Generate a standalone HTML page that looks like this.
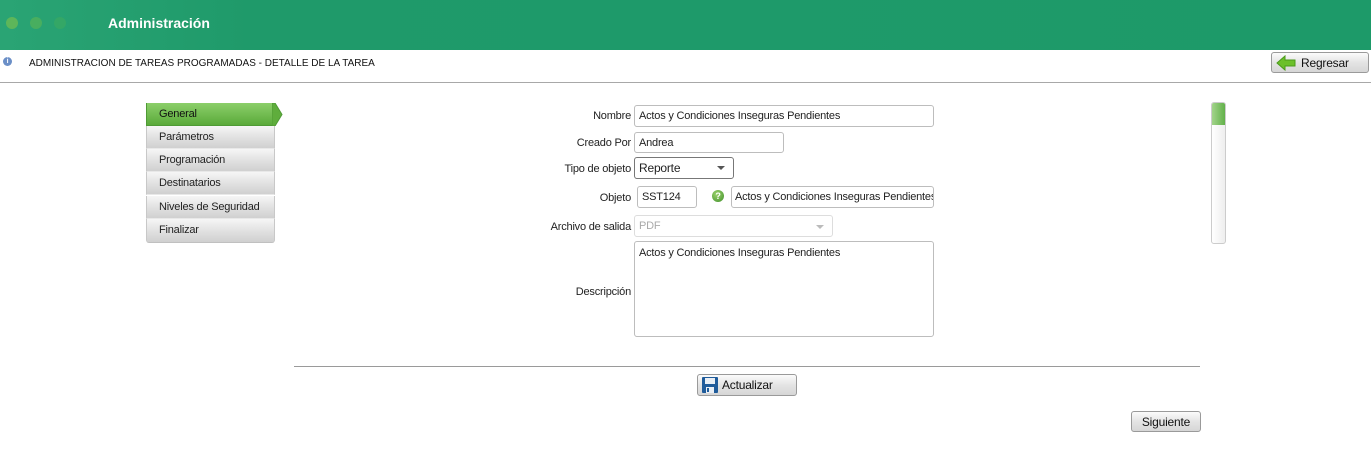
<!DOCTYPE html><html><head><meta charset="utf-8"><style>
*{box-sizing:border-box;margin:0;padding:0}
body{width:1371px;height:464px;background:#fff;position:relative;overflow:hidden;font-family:"Liberation Sans",sans-serif;font-size:11px;letter-spacing:-0.2px;color:#222}
.a{position:absolute;white-space:nowrap}
.hdr{left:0;top:0;width:1371px;height:50px;background:linear-gradient(90deg,#2aa474 0,#1f9a6a 250px,#1d9a69 100%)}
.dot{width:12px;height:12px;border-radius:50%;top:17px}
.btn{border:1px solid #9a9a9a;border-radius:3px;background:linear-gradient(#fbfbfb,#e4e4e4 50%,#d6d6d6);font-size:12px;color:#111;display:flex;align-items:center}
.tab{left:146px;width:129px;height:23px;border-bottom:1px solid #e8e8e8;background:linear-gradient(#f6f6f6,#e0e0e0 55%,#d0d0d0);font-size:11px;padding-left:12px;line-height:23px;border-left:1px solid #c8c8c8;border-right:1px solid #c8c8c8}
.lbl{width:200px;text-align:right;font-size:11px;left:431px}
.in{border:1px solid #bdbdbd;border-radius:3px;background:#fff;font-size:11px;padding-left:4px;display:flex;align-items:center;overflow:hidden}
</style></head><body>
<div class="a hdr"></div>
<div class="a dot" style="left:6px;background:#5db65a"></div>
<div class="a dot" style="left:30px;background:#48ae5f"></div>
<div class="a dot" style="left:54px;background:#34a766"></div>
<div class="a" style="left:108px;top:15px;color:#fff;font-weight:bold;font-size:14px;letter-spacing:0">Administración</div>
<div class="a" style="left:3px;top:57px;width:9px;height:9px;border-radius:50%;background:#6b8fc7;color:#fff;font-size:7px;text-align:center;line-height:9px;font-weight:bold">i</div>
<div class="a" style="left:29px;top:58px;font-size:10px;letter-spacing:0;color:#111">ADMINISTRACION DE TAREAS PROGRAMADAS - DETALLE DE LA TAREA</div>
<div class="a" style="left:0;top:82px;width:1371px;height:1px;background:#a8a8a8"></div>
<div class="a btn" style="left:1271px;top:52px;width:98px;height:21px;padding-left:4px">
<svg width="20" height="16" viewBox="0 0 20 16"><path d="M1 8L9 1V5H19V11H9V15Z" fill="#6cc02a" stroke="#4a9a1a"/></svg><span style="margin-left:5px">Regresar</span></div>

<div class="a tab" style="top:103px;background:linear-gradient(#8ccf6a,#5aaa3a);border-color:#4f9a35;color:#111">General</div>
<svg class="a" style="left:272px;top:103px" width="12" height="23"><path d="M0 0H3L10 11.5L3 23H0Z" fill="#5fad3c" stroke="#4f9a35"/></svg>
<div class="a tab" style="top:126px">Parámetros</div>
<div class="a tab" style="top:149px">Programación</div>
<div class="a tab" style="top:172px">Destinatarios</div>
<div class="a tab" style="top:196px">Niveles de Seguridad</div>
<div class="a tab" style="top:219px;border-bottom:1px solid #c0c0c0;border-radius:0 0 3px 3px;height:24px">Finalizar</div>

<div class="a lbl" style="top:110px">Nombre</div>
<div class="a in" style="left:634px;top:105px;width:300px;height:22px">Actos y Condiciones Inseguras Pendientes</div>
<div class="a lbl" style="top:137px">Creado Por</div>
<div class="a in" style="left:634px;top:132px;width:150px;height:21px">Andrea</div>
<div class="a lbl" style="top:163px">Tipo de objeto</div>
<div class="a in" style="left:634px;top:157px;width:100px;height:22px;border-color:#777;font-size:12px">Reporte<span style="position:absolute;right:8px;top:8px;border:4px solid transparent;border-top:4px solid #555"></span></div>
<div class="a lbl" style="top:192px">Objeto</div>
<div class="a in" style="left:637px;top:186px;width:60px;height:22px">SST124</div>
<div class="a" style="left:712px;top:190px;width:12px;height:12px;border-radius:50%;background:radial-gradient(circle at 40% 35%,#9ed36e,#3e8f2a);color:#fff;font-size:9px;font-weight:bold;text-align:center;line-height:12px">?</div>
<div class="a in" style="left:731px;top:186px;width:203px;height:22px;padding-left:3px">Actos y Condiciones Inseguras Pendientes</div>
<div class="a lbl" style="top:221px">Archivo de salida</div>
<div class="a in" style="left:634px;top:215px;width:199px;height:22px;color:#aaa;border-color:#ddd">PDF<span style="position:absolute;right:8px;top:9px;border:4px solid transparent;border-top:4px solid #bbb"></span></div>
<div class="a lbl" style="top:286px">Descripción</div>
<div class="a in" style="left:634px;top:241px;width:300px;height:96px;align-items:flex-start;padding-top:5px">Actos y Condiciones Inseguras Pendientes</div>

<div class="a" style="left:1211px;top:102px;width:15px;height:142px;border:1px solid #ccc;border-radius:3px;background:linear-gradient(90deg,#fff,#eee)"></div>
<div class="a" style="left:1212px;top:103px;width:13px;height:22px;background:linear-gradient(90deg,#a2d48a,#62b14a);border-radius:2px 2px 0 0"></div>

<div class="a" style="left:294px;top:366px;width:906px;height:1px;background:#9a9a9a"></div>
<div class="a btn" style="left:697px;top:374px;width:100px;height:22px;padding-left:4px">
<svg width="16" height="16" viewBox="0 0 16 16"><rect x="0" y="0" width="16" height="16" rx="1" fill="#1f5b9a"/><rect x="3" y="1" width="10" height="6" fill="#e8eef5"/><rect x="4" y="10" width="8" height="6" fill="#e8eef5"/><rect x="5" y="11" width="2" height="4" fill="#1f5b9a"/></svg><span style="margin-left:4px">Actualizar</span></div>
<div class="a btn" style="left:1131px;top:411px;width:70px;height:21px;justify-content:center">Siguiente</div>
</body></html>
